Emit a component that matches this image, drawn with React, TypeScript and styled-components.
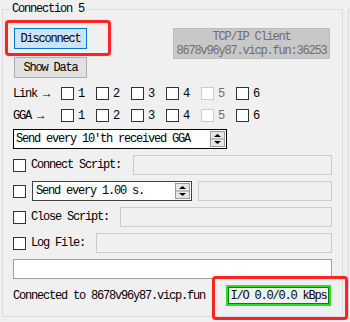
import styled, { createGlobalStyle } from "styled-components";

const GlobalStyle = createGlobalStyle`
  html, body {
    margin: 0;
    padding: 0;
    background: #f0f0f0;
  }
  body {
    width: 350px;
    height: 322px;
    overflow: hidden;
    font-family: "Liberation Mono", "DejaVu Sans Mono", monospace;
    font-size: 12px;
    letter-spacing: -1.2px;
    color: #000;
  }
`;

const Screen = styled.div`
  display: flex;
  gap: 5px;
  width: 350px;
  height: 322px;
  padding: 9px 0 0 2px;
  box-sizing: border-box;
  overflow: hidden;
`;

const Group = styled.section`
  flex: none;
  width: 341px;
  height: 308px;
  box-sizing: border-box;
  border: 1px solid #dcdcdc;
  padding: 0 10px;
  display: flex;
  flex-direction: column;
`;

const NextGroup = styled.div`
  flex: none;
  width: 20px;
  height: 308px;
  border: 1px solid #dcdcdc;
  border-right: none;
`;

const Title = styled.div`
  align-self: flex-start;
  margin: -8px 0 0 -3px;
  padding: 0 2px;
  height: 14px;
  line-height: 14px;
  background: #f0f0f0;
  white-space: pre;
`;

const TopBlock = styled.div`
  display: flex;
  justify-content: space-between;
  align-items: flex-start;
  margin-top: 12px;
`;

const ButtonColumn = styled.div`
  display: flex;
  flex-direction: column;
  gap: 8px;
  padding-left: 1px;
`;

const Button = styled.div<{ $active?: boolean }>`
  position: relative;
  width: 73px;
  height: 21px;
  box-sizing: border-box;
  display: flex;
  align-items: center;
  justify-content: center;
  border: 1px solid ${(p) => (p.$active ? "#0078d7" : "#adadad")};
  background: ${(p) => (p.$active ? "#cce4f7" : "#e1e1e1")};
  white-space: pre;
`;

const Highlight = styled.span<{ $l: number; $t: number; $w: number; $h: number }>`
  position: absolute;
  left: ${(p) => p.$l}px;
  top: ${(p) => p.$t}px;
  width: ${(p) => p.$w}px;
  height: ${(p) => p.$h}px;
  box-sizing: border-box;
  border: 3px solid #ff2222;
  border-radius: 4px;
  box-shadow: 0 0 1px #ff7070;
  pointer-events: none;
`;

const ClientBox = styled.div`
  width: 157px;
  height: 31px;
  margin-right: 2px;
  box-sizing: border-box;
  border: 1px solid #bcbcbc;
  background: #c8c8c8;
  color: #6d6d6d;
  text-align: center;
  line-height: 14px;
  padding-top: 1px;
  white-space: pre;
`;

const CheckRow = styled.div<{ $top: number }>`
  display: flex;
  align-items: center;
  height: 13px;
  margin-top: ${(p) => p.$top}px;
`;

const RowLabel = styled.span`
  width: 48px;
  white-space: pre;
`;

const CheckItem = styled.span<{ $disabled?: boolean }>`
  display: flex;
  align-items: center;
  width: 35px;
  color: ${(p) => (p.$disabled ? "#6d6d6d" : "#000")};
`;

const Box = styled.span<{ $disabled?: boolean }>`
  flex: none;
  width: 13px;
  height: 13px;
  box-sizing: border-box;
  border: 1px solid ${(p) => (p.$disabled ? "#cccccc" : "#333333")};
  background: #fff;
`;

const ItemText = styled.span`
  margin-left: 4px;
`;

const Select = styled.div`
  display: flex;
  align-items: center;
  justify-content: space-between;
  width: 214px;
  height: 20px;
  margin-top: 7px;
  box-sizing: border-box;
  border: 1px solid #000;
  background: #fff;
  padding: 0 1px 0 2px;
  white-space: pre;
`;

const FieldRow = styled.div`
  display: flex;
  align-items: center;
  height: 20px;
  margin-top: 6px;
`;

const FieldLabel = styled.span`
  margin-left: 5px;
  white-space: pre;
`;

const Field = styled.div<{ $gap: number }>`
  flex: 1;
  height: 20px;
  margin-left: ${(p) => p.$gap}px;
  box-sizing: border-box;
  border: 1px solid #cccccc;
  background: #f0f0f0;
`;

const Spin = styled.div`
  display: flex;
  align-items: center;
  justify-content: space-between;
  width: 160px;
  height: 20px;
  margin-left: 6px;
  box-sizing: border-box;
  border: 1px solid #404040;
  background: #fff;
  padding: 0 1px 0 3px;
  white-space: pre;
`;

const WhiteField = styled.div`
  height: 20px;
  margin-top: 6px;
  box-sizing: border-box;
  border: 1px solid #a0a0a0;
  background: #fff;
`;

const Footer = styled.div`
  display: flex;
  align-items: center;
  justify-content: space-between;
  height: 21px;
  margin-top: 6px;
  white-space: pre;
`;

const Rate = styled.div`
  position: relative;
  width: 105px;
  height: 21px;
  margin-right: 1px;
  box-sizing: border-box;
  border: 2px solid #22e022;
  box-shadow: inset 0 0 0 1px #0b7d0b;
  display: flex;
  align-items: center;
  justify-content: center;
`;

const SpinArrows = () => (
  <svg width="15" height="16" viewBox="0 0 15 16">
    <rect x="0.5" y="0.5" width="14" height="15" fill="#e6e6e6" stroke="#9a9a9a" />
    <line x1="1" y1="8" x2="14" y2="8" stroke="#9a9a9a" />
    <path d="M4 6 L7.5 3 L11 6 Z" fill="#000" />
    <path d="M4 10 L11 10 L7.5 13 Z" fill="#000" />
  </svg>
);

const numbers = [1, 2, 3, 4, 5, 6];

const Checks = () => (
  <>
    {numbers.map((n) => (
      <CheckItem key={n} $disabled={n === 5}>
        <Box $disabled={n === 5} />
        <ItemText>{n}</ItemText>
      </CheckItem>
    ))}
  </>
);

export default function App() {
  return (
    <>
      <GlobalStyle />
      <Screen>
        <Group>
          <Title>Connection 5</Title>

          <TopBlock>
            <ButtonColumn>
              <Button $active>
                Disconnect
                <Highlight $l={-10} $t={-9} $w={106} $h={36} />
              </Button>
              <Button>Show Data</Button>
            </ButtonColumn>
            <ClientBox>
              TCP/IP Client
              <br />
              8678v96y87.vicp.fun:36253
            </ClientBox>
          </TopBlock>

          <CheckRow $top={9}>
            <RowLabel>Link →</RowLabel>
            <Checks />
          </CheckRow>
          <CheckRow $top={9}>
            <RowLabel>GGA →</RowLabel>
            <Checks />
          </CheckRow>

          <Select>
            Send every 10'th received GGA
            <SpinArrows />
          </Select>

          <FieldRow>
            <Box />
            <FieldLabel>Connect Script:</FieldLabel>
            <Field $gap={12} />
          </FieldRow>

          <FieldRow>
            <Box />
            <Spin>
              Send every 1.00 s.
              <SpinArrows />
            </Spin>
            <Field $gap={6} />
          </FieldRow>

          <FieldRow>
            <Box />
            <FieldLabel>Close Script:</FieldLabel>
            <Field $gap={11} />
          </FieldRow>

          <FieldRow>
            <Box />
            <FieldLabel>Log File:</FieldLabel>
            <Field $gap={11} />
          </FieldRow>

          <WhiteField />

          <Footer>
            Connected to 8678v96y87.vicp.fun
            <Rate>
              I/O 0.0/0.0 kBps
              <Highlight $l={-16} $t={-11} $w={136} $h={44} />
            </Rate>
          </Footer>
        </Group>
        <NextGroup />
      </Screen>
    </>
  );
}
